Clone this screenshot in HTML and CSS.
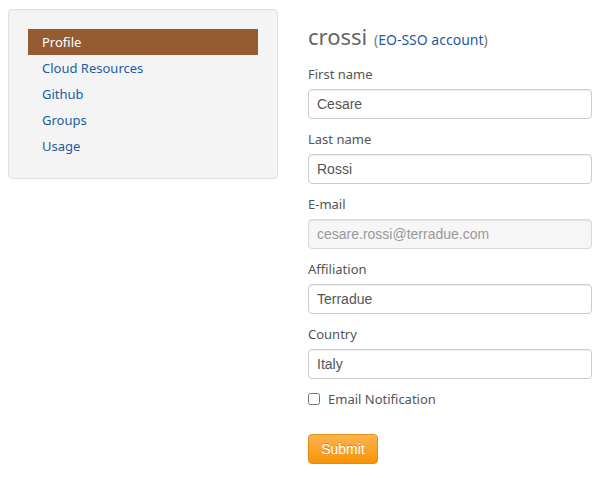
FILE: index.html
```html
<!DOCTYPE html>
<html>
<head>
<meta charset="utf-8">
<link rel="stylesheet" href="styles.css">
</head>
<body>
<div class="page">
  <aside class="well">
    <ul class="nav">
      <li class="active"><a href="#">Profile</a></li>
      <li><a href="#">Cloud Resources</a></li>
      <li><a href="#">Github</a></li>
      <li><a href="#">Groups</a></li>
      <li><a href="#">Usage</a></li>
    </ul>
  </aside>
  <main class="content">
    <h2 class="title">crossi <small>(<a href="#">EO-SSO account</a>)</small></h2>
    <form class="form">
      <div class="field">
        <label>First name</label>
        <input type="text" value="Cesare">
      </div>
      <div class="field">
        <label>Last name</label>
        <input type="text" value="Rossi">
      </div>
      <div class="field">
        <label>E-mail</label>
        <input type="text" value="cesare.rossi@terradue.com" disabled>
      </div>
      <div class="field">
        <label>Affiliation</label>
        <input type="text" value="Terradue">
      </div>
      <div class="field">
        <label>Country</label>
        <input type="text" value="Italy">
      </div>
      <label class="check"><input type="checkbox"> Email Notification</label>
      <button type="button" class="btn">Submit</button>
    </form>
  </main>
</div>
</body>
</html>
```
FILE: styles.css
```css
html, body { margin: 0; padding: 0; background: #fff; }
body {
  font-family: "Noto Sans", "DejaVu Sans", sans-serif;
  font-size: 13px;
  color: #555;
}
.page {
  display: flex;
  align-items: flex-start;
  padding: 9px 8px 0 8px;
  gap: 30px;
}
.well {
  width: 230px;
  padding: 19px;
  background: #f4f4f4;
  border: 1px solid #e1e1e1;
  border-radius: 4px;
  box-shadow: inset 0 1px 1px rgba(0,0,0,0.03);
}
.nav { list-style: none; margin: 0; padding: 0; }
.nav li a {
  display: block;
  height: 26px;
  line-height: 26px;
  padding: 0 14px;
  color: #1f5ba3;
  text-decoration: none;
}
.nav li.active a { background: #955c31; color: #fff; }
.content { width: 284px; }
.title {
  margin: 13px 0 0 0;
  font-size: 22px;
  font-weight: normal;
  line-height: 28px;
  color: #666;
}
.title small { font-size: 14px; color: #777; margin-left: 1px; }
.title small a { color: #1f5ba3; text-decoration: none; }
.form { margin-top: 10px; }
.field label {
  display: block;
  line-height: 20px;
  margin-bottom: 5px;
}
.field input {
  display: block;
  box-sizing: border-box;
  width: 284px;
  height: 30px;
  margin: 0 0 10px 0;
  padding: 4px 8px;
  border: 1px solid #ccc;
  border-radius: 4px;
  font-family: "Liberation Sans", Arial, sans-serif;
  font-size: 14px;
  color: #555;
  background: #fff;
  box-shadow: inset 0 1px 1px rgba(0,0,0,0.075);
}
.field input:disabled { background: #f6f6f6; color: #999; border-color: #d9d9d9; }
.check {
  display: flex;
  align-items: center;
  gap: 8px;
  line-height: 20px;
}
.check input { margin: 0; width: 12px; height: 12px; }
.btn {
  display: block;
  margin-top: 25px;
  width: 70px;
  height: 30px;
  border: 1px solid #e38d13;
  border-radius: 4px;
  background: linear-gradient(#fbb450, #f89406);
  color: #fff;
  font-family: "Liberation Sans", Arial, sans-serif;
  font-size: 14px;
  text-shadow: 0 -1px 0 rgba(0,0,0,0.2);
  padding: 0;
}
```
